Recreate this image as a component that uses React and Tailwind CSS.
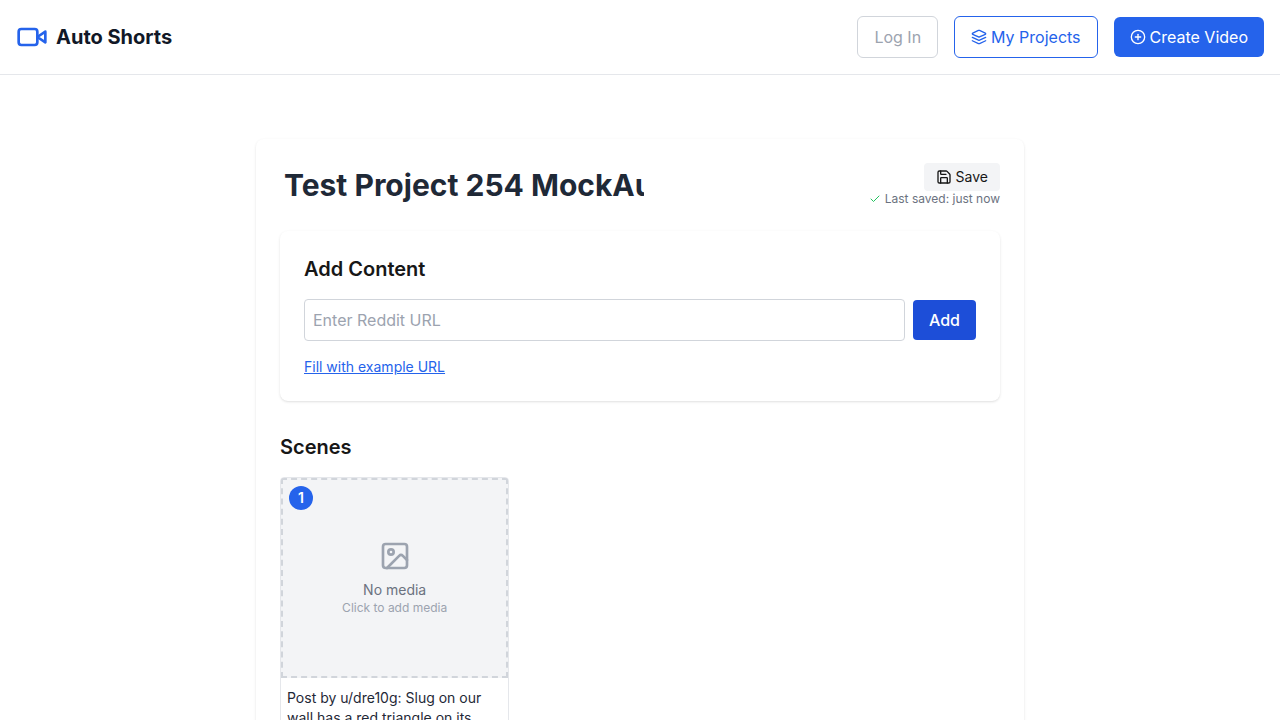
import { Check, CirclePlus, Save } from "lucide-react";

function Icon({ className, children }) {
  return (
    <svg
      viewBox="0 0 24 24"
      fill="none"
      stroke="currentColor"
      strokeWidth="2"
      strokeLinecap="round"
      strokeLinejoin="round"
      aria-hidden="true"
      className={className}
    >
      {children}
    </svg>
  );
}

function Header() {
  return (
    <header className="flex items-center justify-between border-b border-[#e5e7eb] bg-white p-4">
      <a href="#home" className="flex items-center gap-2 text-xl font-bold text-[#111827]">
        <Icon className="size-8 text-[#2563eb]">
          <path d="m22 8-6 4 6 4V8Z" />
          <rect width="14" height="12" x="2" y="6" rx="2" ry="2" />
        </Icon>
        Auto Shorts
      </a>
      <nav className="flex items-center gap-4">
        <button type="button" className="rounded-md border border-[#d1d5db] px-4 py-2 text-[#9ca3af]">
          Log In
        </button>
        <a
          href="#projects"
          className="flex items-center gap-1 rounded-md border border-[#2563eb] px-4 py-2 text-[#2563eb]"
        >
          <Icon className="size-4">
            <path d="m12.83 2.18a2 2 0 0 0-1.66 0L2.6 6.08a1 1 0 0 0 0 1.83l8.58 3.91a2 2 0 0 0 1.66 0l8.58-3.9a1 1 0 0 0 0-1.83Z" />
            <path d="m22 17.65-9.17 4.16a2 2 0 0 1-1.66 0L2 17.65" />
            <path d="m22 12.65-9.17 4.16a2 2 0 0 1-1.66 0L2 12.65" />
          </Icon>
          My Projects
        </a>
        <a href="#create" className="flex items-center gap-1 rounded-md bg-[#2563eb] px-4 py-2 text-white">
          <CirclePlus className="size-4" />
          Create Video
        </a>
      </nav>
    </header>
  );
}

function ProjectHeader() {
  return (
    <div className="mb-6 flex items-center justify-between">
      <input
        type="text"
        aria-label="Project title"
        defaultValue="Test Project 254 MockAuto"
        className="w-92 bg-transparent px-1 text-3xl font-bold text-[#1f2937] outline-none"
      />
      <div className="flex flex-col items-end">
        <button type="button" className="flex items-center gap-1 rounded bg-[#f3f4f6] px-3 py-1 text-sm">
          <Save className="size-4" />
          Save
        </button>
        <p className="flex items-center gap-1 text-xs text-[#6b7280]">
          <Check className="size-3 text-[#22c55e]" />
          Last saved: just now
        </p>
      </div>
    </div>
  );
}

function AddContent() {
  return (
    <section className="rounded-lg bg-white p-6 shadow-sm">
      <h2 className="mb-4 text-xl font-semibold">Add Content</h2>
      <form className="flex items-center gap-2" onSubmit={(e) => e.preventDefault()}>
        <input
          type="url"
          aria-label="Reddit URL"
          placeholder="Enter Reddit URL"
          className="min-w-0 flex-1 rounded border border-[#d1d5db] p-2 outline-none placeholder:text-[#9ca3af]"
        />
        <button type="submit" className="rounded bg-[#1d4ed8] px-4 py-2 font-medium text-white">
          Add
        </button>
      </form>
      <button type="button" className="mt-4 block text-sm text-[#2563eb] underline">
        Fill with example URL
      </button>
    </section>
  );
}

function SceneCard({ number, text }) {
  return (
    <article className="relative overflow-hidden rounded border border-[#e5e7eb] bg-white">
      <button
        type="button"
        className="flex h-50 w-full flex-col items-center justify-center border-2 border-dashed border-[#d1d5db] bg-[#f3f4f6]"
      >
        <Icon className="mb-2 size-8 text-[#9ca3af]">
          <rect width="18" height="18" x="3" y="3" rx="2" ry="2" />
          <circle cx="9" cy="9" r="2" />
          <path d="m21 15-3.086-3.086a2 2 0 0 0-2.828 0L6 21" />
        </Icon>
        <span className="text-sm text-[#6b7280]">No media</span>
        <span className="text-xs text-[#9ca3af]">Click to add media</span>
      </button>
      <span className="absolute top-2 left-2 flex size-6 items-center justify-center rounded-full bg-[#2563eb] text-sm font-semibold text-white">
        {number}
      </span>
      <p className="px-1.5 py-2.5 text-sm text-[#1f2937]">{text}</p>
    </article>
  );
}

export default function App() {
  return (
    <div className="min-h-screen bg-white font-['Inter',sans-serif] text-[#171717]">
      <Header />
      <main className="mx-auto my-16 max-w-3xl rounded-lg bg-white p-6 shadow-sm">
        <ProjectHeader />
        <AddContent />
        <section className="mt-8">
          <h2 className="mb-4 text-xl font-semibold">Scenes</h2>
          <div className="grid grid-cols-3 gap-4">
            <SceneCard number={1} text="Post by u/dre10g: Slug on our wall has a red triangle on its" />
          </div>
        </section>
      </main>
    </div>
  );
}
